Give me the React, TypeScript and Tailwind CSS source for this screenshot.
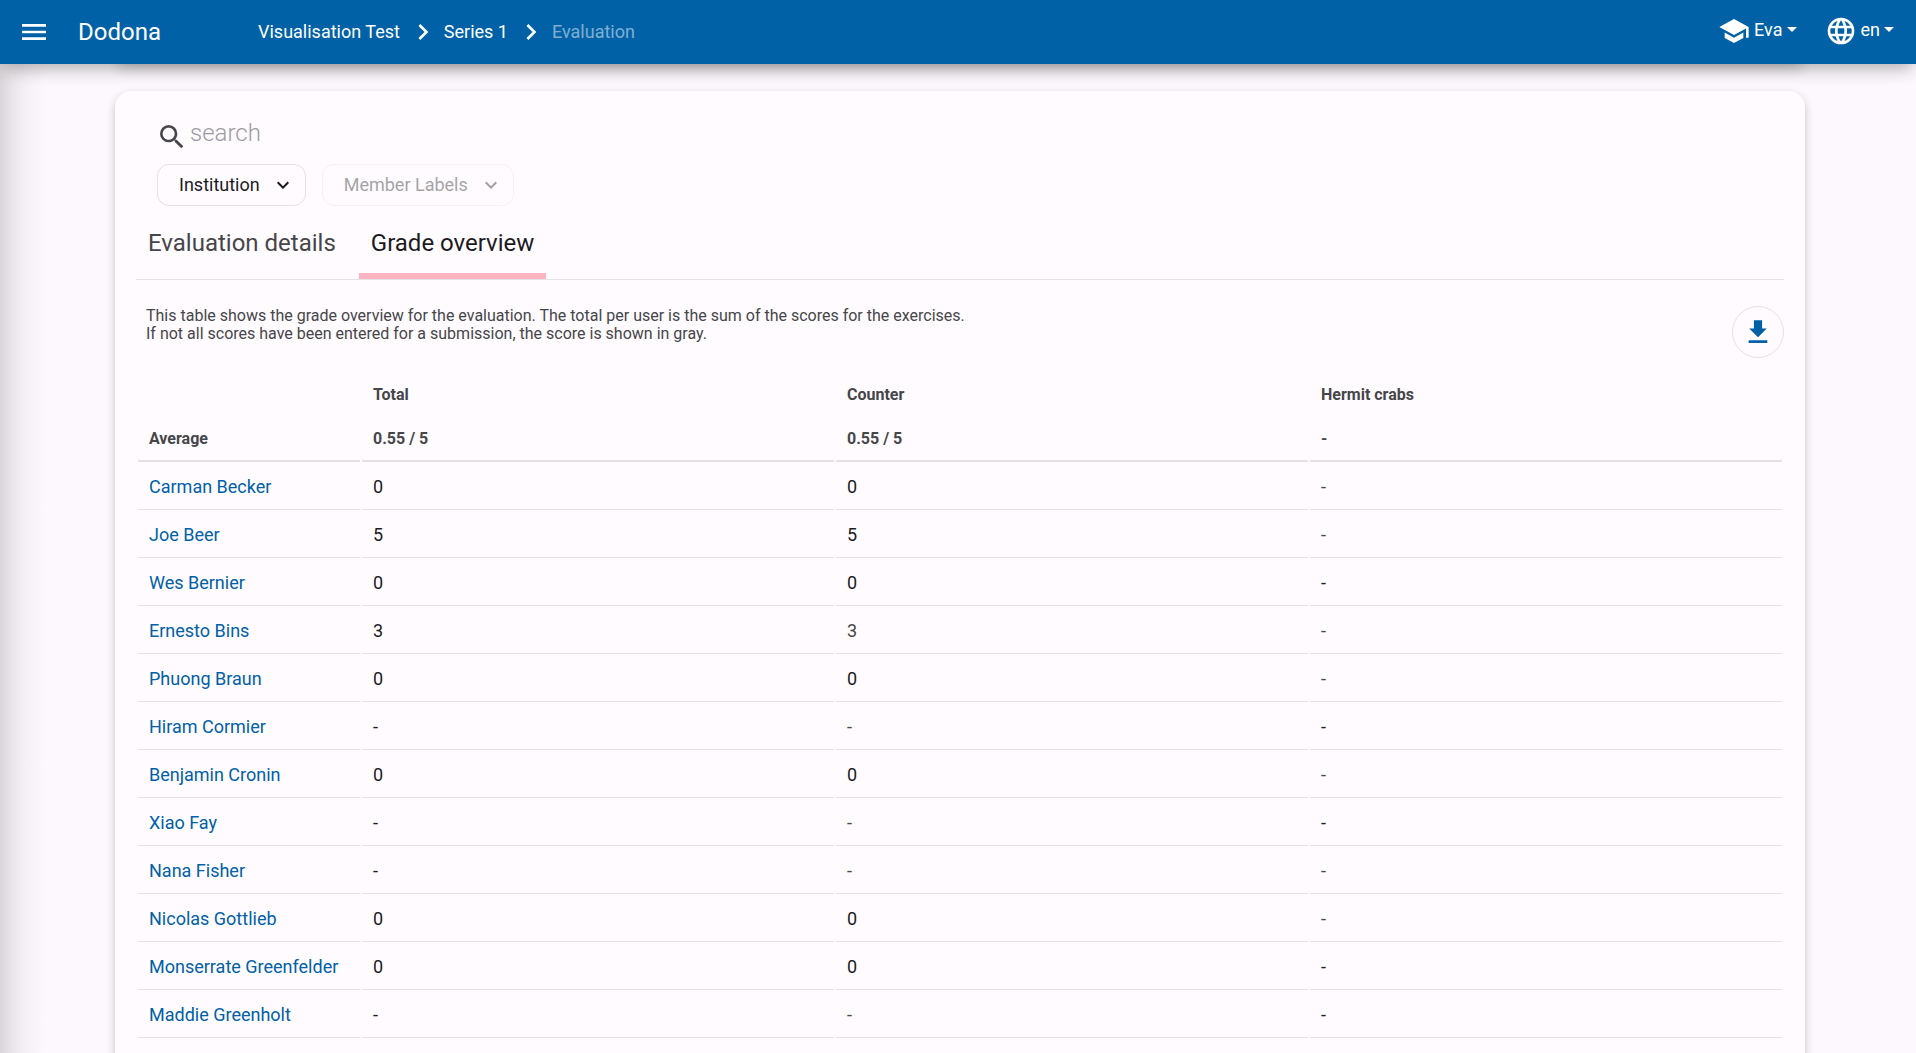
import type { ReactNode } from "react";

type Score = { value: string; partial?: boolean };

const s = (value: string): Score => ({ value });
const gray = (value: string): Score => ({ value, partial: true });

const rows: { name: string; scores: Score[] }[] = [
  { name: "Carman Becker", scores: [s("0"), s("0"), gray("-")] },
  { name: "Joe Beer", scores: [s("5"), s("5"), gray("-")] },
  { name: "Wes Bernier", scores: [s("0"), s("0"), s("-")] },
  { name: "Ernesto Bins", scores: [s("3"), gray("3"), gray("-")] },
  { name: "Phuong Braun", scores: [s("0"), s("0"), gray("-")] },
  { name: "Hiram Cormier", scores: [s("-"), gray("-"), s("-")] },
  { name: "Benjamin Cronin", scores: [s("0"), s("0"), gray("-")] },
  { name: "Xiao Fay", scores: [s("-"), gray("-"), s("-")] },
  { name: "Nana Fisher", scores: [s("-"), gray("-"), gray("-")] },
  { name: "Nicolas Gottlieb", scores: [s("0"), s("0"), gray("-")] },
  { name: "Monserrate Greenfelder", scores: [s("0"), s("0"), s("-")] },
  { name: "Maddie Greenholt", scores: [s("-"), gray("-"), s("-")] },
];

function Icon({ d, size }: { d: string; size: number }) {
  return (
    <svg width={size} height={size} viewBox="0 0 24 24" fill="currentColor" aria-hidden="true" className="shrink-0">
      <path d={d} />
    </svg>
  );
}

const icons = {
  menu: "M3,6H21V8H3V6M3,11H21V13H3V11M3,16H21V18H3V16Z",
  chevronRight: "M8.59,16.58L13.17,12L8.59,7.41L10,6L16,12L10,18L8.59,16.58Z",
  chevronDown: "M7.41,8.58L12,13.17L16.59,8.58L18,10L12,16L6,10L7.41,8.58Z",
  school: "M12,3L1,9L12,15L21,10.09V17H23V9M5,13.18V17.18L12,21L19,17.18V13.18L12,17L5,13.18Z",
  web: "M16.36,14C16.44,13.34 16.5,12.68 16.5,12C16.5,11.32 16.44,10.66 16.36,10H19.74C19.9,10.64 20,11.31 20,12C20,12.69 19.9,13.36 19.74,14M14.59,19.56C15.19,18.45 15.65,17.25 15.97,16H18.92C17.96,17.65 16.43,18.93 14.59,19.56M14.34,14H9.66C9.56,13.34 9.5,12.68 9.5,12C9.5,11.32 9.56,10.65 9.66,10H14.34C14.43,10.65 14.5,11.32 14.5,12C14.5,12.68 14.43,13.34 14.34,14M12,19.96C11.17,18.76 10.5,17.43 10.09,16H13.91C13.5,17.43 12.83,18.76 12,19.96M8,8H5.08C6.03,6.34 7.57,5.06 9.4,4.44C8.8,5.55 8.35,6.75 8,8M5.08,16H8C8.35,17.25 8.8,18.45 9.4,19.56C7.57,18.93 6.03,17.65 5.08,16M4.26,14C4.1,13.36 4,12.69 4,12C4,11.31 4.1,10.64 4.26,10H7.64C7.56,10.66 7.5,11.32 7.5,12C7.5,12.68 7.56,13.34 7.64,14M12,4.03C12.83,5.23 13.5,6.57 13.91,8H10.09C10.5,6.57 11.17,5.23 12,4.03M18.92,8H15.97C15.65,6.75 15.19,5.55 14.59,4.44C16.43,5.07 17.96,6.34 18.92,8M12,2C6.47,2 2,6.5 2,12A10,10 0 0,0 12,22A10,10 0 0,0 22,12A10,10 0 0,0 12,2Z",
  magnify:
    "M9.5,3A6.5,6.5 0 0,1 16,9.5C16,11.11 15.41,12.59 14.44,13.73L14.71,14H15.5L20.5,19L19,20.5L14,15.5V14.71L13.73,14.44C12.59,15.41 11.11,16 9.5,16A6.5,6.5 0 0,1 3,9.5A6.5,6.5 0 0,1 9.5,3M9.5,5C7,5 5,7 5,9.5C5,12 7,14 9.5,14C12,14 14,12 14,9.5C14,7 12,5 9.5,5Z",
  download: "M8.5,2V9H4.5L12,16.5L19.5,9H15.5V2H8.5M4,19V21.5H20V19H4Z",
};

function NavMenu({ icon, children }: { icon: string; children: ReactNode }) {
  return (
    <button type="button" className="flex items-center gap-1 text-lg leading-6">
      <Icon d={icon} size={32} />
      <span className="pb-0.5">{children}</span>
      <span className="mb-1 border-x-[5px] border-t-[5px] border-x-transparent border-t-white" />
    </button>
  );
}

function Navbar() {
  return (
    <header className="relative z-10 flex h-16 items-center bg-[#0061a6] pl-[18px] pr-[22px] text-white shadow-[0_8px_18px_-4px_rgba(0,0,0,0.32)]">
      <button type="button" aria-label="Menu" className="mr-7">
        <Icon d={icons.menu} size={32} />
      </button>
      <a href="#home" className="w-[180px] text-2xl">
        Dodona
      </a>
      <nav aria-label="Breadcrumb" className="flex items-center gap-[5px] text-lg">
        <a href="#course" className="pr-0.5">
          Visualisation Test
        </a>
        <Icon d={icons.chevronRight} size={32} />
        <a href="#series" className="pr-0.5">
          Series 1
        </a>
        <Icon d={icons.chevronRight} size={32} />
        <span className="text-white/50">Evaluation</span>
      </nav>
      <div className="ml-auto flex gap-7 pb-0.5">
        <NavMenu icon={icons.school}>Eva</NavMenu>
        <NavMenu icon={icons.web}>en</NavMenu>
      </div>
    </header>
  );
}

function Filter({ label, disabled }: { label: string; disabled?: boolean }) {
  return (
    <button
      type="button"
      disabled={disabled}
      className="flex h-[42px] items-center gap-[11px] rounded-xl border border-[#e5e0e5] pl-[21px] pr-2.5 text-lg text-[#1b1b1f] disabled:opacity-40"
    >
      {label}
      <Icon d={icons.chevronDown} size={24} />
    </button>
  );
}

function GradeTable() {
  return (
    <table className="mt-[14px] w-full table-fixed border-separate border-spacing-[2px] text-left">
      <colgroup>
        <col className="w-[222px]" />
        <col />
        <col />
        <col />
      </colgroup>
      <thead className="text-base text-[#46464a]">
        <tr className="h-[42px]">
          <td />
          <th className="px-[11px] font-bold">Total</th>
          <th className="px-[11px] font-bold">Counter</th>
          <th className="px-[11px] font-bold">Hermit crabs</th>
        </tr>
        <tr className="h-[44px]">
          <th className="border-b-2 border-[#e5e0e5] px-[11px] font-bold">Average</th>
          <th className="border-b-2 border-[#e5e0e5] px-[11px] font-bold">0.55 / 5</th>
          <th className="border-b-2 border-[#e5e0e5] px-[11px] font-bold">0.55 / 5</th>
          <th className="border-b-2 border-[#e5e0e5] px-[11px] font-bold">-</th>
        </tr>
      </thead>
      <tbody className="text-lg">
        {rows.map((row) => (
          <tr key={row.name} className="h-[46px]">
            <td className="whitespace-nowrap border-b border-[#e5e0e5] px-[11px]">
              <a href="#user" className="text-[#0061a6]">
                {row.name}
              </a>
            </td>
            {row.scores.map((score, i) => (
              <td
                key={i}
                className={`border-b border-[#e5e0e5] px-[11px] ${score.partial ? "text-[#46464a]" : "text-[#1b1b1f]"}`}
              >
                {score.value}
              </td>
            ))}
          </tr>
        ))}
      </tbody>
    </table>
  );
}

export default function App() {
  return (
    <div className="flex h-screen flex-col overflow-hidden bg-[#fcf8fd] font-[Roboto,sans-serif] text-[#1b1b1f]">
      <Navbar />
      {/* Edge shadow of the collapsed drawer */}
      <div className="min-h-0 flex-1 bg-[linear-gradient(to_right,rgba(0,0,0,0.14),rgba(0,0,0,0.08)_12px,rgba(0,0,0,0.03)_26px,transparent_46px)]">
        {/* Title bar tucked under the navbar, only its shadow shows */}
        <div className="-mt-4 ml-[119px] mr-[115px] h-4 shadow-[0_3px_14px_rgba(0,0,0,0.2)]" />
        <main className="ml-[115px] mr-[111px] mt-[27px] min-h-full rounded-2xl bg-[#fffbff] px-[21px] pt-[26px] shadow-[0_4px_10px_rgba(0,0,0,0.22)]">
          <label className="flex items-center gap-0.5 pl-5 text-[#46464a]">
            <Icon d={icons.magnify} size={32} />
            <input
              type="search"
              aria-label="search"
              placeholder="search"
              className="mb-2 flex-1 bg-transparent text-2xl font-light outline-none placeholder:text-[#9c9a9f]"
            />
          </label>
          <div className="mt-[7px] flex gap-4 pl-[21px]">
            <Filter label="Institution" />
            <Filter label="Member Labels" disabled />
          </div>

          <div role="tablist" className="mt-3 flex border-b border-[#e5e0e5] text-2xl">
            <button type="button" role="tab" className="h-[61px] px-3 pb-3 text-[#46464a]">
              Evaluation details
            </button>
            <button
              type="button"
              role="tab"
              aria-selected="true"
              className="ml-[11px] h-[61px] border-b-6 border-[#ffb2bf] px-3 pb-1.5"
            >
              Grade overview
            </button>
          </div>

          <div className="mt-[26px] flex items-start justify-between">
            <p className="pl-[10px] pt-px text-base/[18px] text-[#46464a]">
              This table shows the grade overview for the evaluation. The total per user is the sum of the scores for
              the exercises.
              <br />
              If not all scores have been entered for a submission, the score is shown in gray.
            </p>
            <button
              type="button"
              aria-label="Download"
              className="flex size-[52px] items-center justify-center rounded-full border border-[#e5e0e5] text-[#0061a6]"
            >
              <Icon d={icons.download} size={28} />
            </button>
          </div>

          <GradeTable />
        </main>
      </div>
    </div>
  );
}
